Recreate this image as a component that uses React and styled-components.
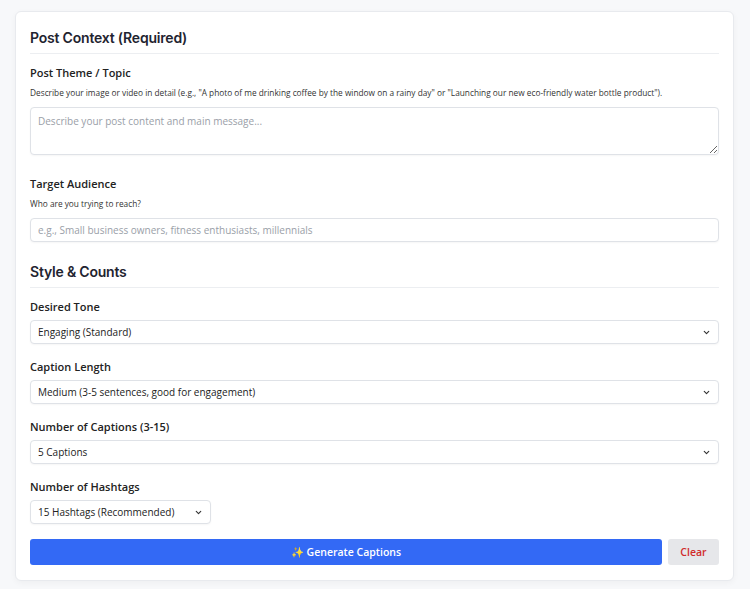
import React from 'react'
import styled, { createGlobalStyle } from 'styled-components'

const Global = createGlobalStyle`
  body { margin: 0; background: #f7f8fa; font-family: "Open Sans", "Liberation Sans", sans-serif; color: #1f2430; }
  * { box-sizing: border-box; }
`

const Page = styled.div`
  padding: 11px 16px 12px 15px;
`

const Card = styled.form`
  background: #fff;
  border: 1px solid #e8eaee;
  border-radius: 6px;
  box-shadow: 0 2px 6px rgba(0, 0, 0, 0.04);
  padding: 17px 14px 15px 14px;
  display: flex;
  flex-direction: column;
`

const Heading = styled.h2`
  font-family: Inter, sans-serif;
  font-size: 14px;
  font-weight: 600;
  margin: 0 0 11px;
  padding-bottom: 7px;
  border-bottom: 1px solid #eceef1;
  letter-spacing: -0.2px;
`

const Field = styled.div`
  display: flex;
  flex-direction: column;
  margin-bottom: ${p => p.$mb || 15}px;
`

const Label = styled.label`
  font-size: 11px;
  font-weight: 600;
  margin: 0 0 6px;
  color: #222;
`

const Help = styled.p`
  font-size: 8.3px;
  margin: 1px 0 9px;
  color: #333;
`

const boxCss = `
  border: 1px solid #dfe2e7;
  border-radius: 4px;
  background: #fff;
  font-family: "Open Sans", sans-serif;
  font-size: 10px;
  color: #222;
  box-shadow: 0 1px 2px rgba(0,0,0,0.04);
`

const TextArea = styled.textarea`
  ${boxCss}
  height: 48px;
  padding: 6px 7px;
  resize: vertical;
  &::placeholder { color: #9aa0a8; }
`

const Input = styled.input`
  ${boxCss}
  height: 24px;
  padding: 0 7px;
  &::placeholder { color: #9aa0a8; }
`

const SelectBox = styled.div`
  ${boxCss}
  height: 24px;
  width: ${p => p.$w || '100%'};
  display: flex;
  align-items: center;
  justify-content: space-between;
  padding: 0 7px;
`

const Actions = styled.div`
  display: flex;
  gap: 6px;
`

const Primary = styled.button`
  flex: 1;
  height: 26px;
  border: 0;
  border-radius: 3px;
  background: #3369f5;
  color: #fff;
  font-family: "Open Sans", sans-serif;
  font-weight: 600;
  font-size: 10.5px;
`

const Secondary = styled.button`
  width: 51px;
  height: 26px;
  border: 0;
  border-radius: 3px;
  background: #e6e7ea;
  color: #d12b2b;
  font-family: "Open Sans", sans-serif;
  font-weight: 600;
  font-size: 10.5px;
`

const Chevron = () => (
  <svg width="9" height="9" viewBox="0 0 24 24" fill="none" stroke="#333" strokeWidth="3" strokeLinecap="round" strokeLinejoin="round">
    <path d="M6 9l6 6 6-6" />
  </svg>
)

function Select ({ value, width }) {
  return (
    <SelectBox $w={width}>
      <span>{value}</span>
      <Chevron />
    </SelectBox>
  )
}

export default function App () {
  return (
    <Page>
      <Global />
      <Card>
        <Heading>Post Context (Required)</Heading>
        <Field $mb={21}>
          <Label>Post Theme / Topic</Label>
          <Help>Describe your image or video in detail (e.g., "A photo of me drinking coffee by the window on a rainy day" or "Launching our new eco-friendly water bottle product").</Help>
          <TextArea placeholder="Describe your post content and main message..." />
        </Field>
        <Field $mb={21}>
          <Label>Target Audience</Label>
          <Help>Who are you trying to reach?</Help>
          <Input placeholder="e.g., Small business owners, fitness enthusiasts, millennials" />
        </Field>
        <Heading>Style &amp; Counts</Heading>
        <Field>
          <Label>Desired Tone</Label>
          <Select value="Engaging (Standard)" />
        </Field>
        <Field>
          <Label>Caption Length</Label>
          <Select value="Medium (3-5 sentences, good for engagement)" />
        </Field>
        <Field>
          <Label>Number of Captions (3-15)</Label>
          <Select value="5 Captions" />
        </Field>
        <Field>
          <Label>Number of Hashtags</Label>
          <Select value="15 Hashtags (Recommended)" width="181px" />
        </Field>
        <Actions>
          <Primary type="button">✨ Generate Captions</Primary>
          <Secondary type="button">Clear</Secondary>
        </Actions>
      </Card>
    </Page>
  )
}
